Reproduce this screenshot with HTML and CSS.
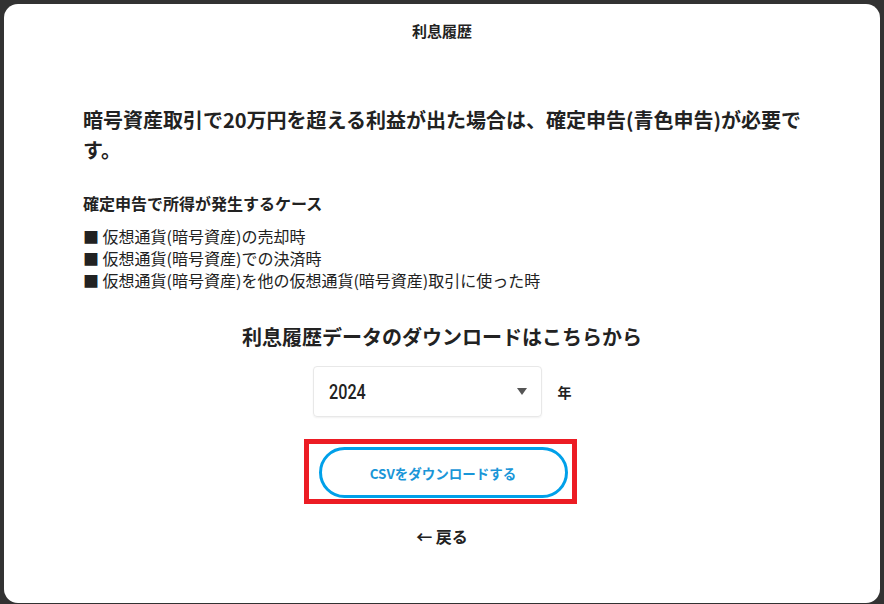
FILE: index.html
```html
<!DOCTYPE html>
<html lang="ja">
<head>
<meta charset="utf-8">
<title>利息履歴</title>
<link rel="stylesheet" href="styles.css">
</head>
<body>
<div class="card">
  <header class="card-title">利息履歴</header>
  <main class="content">
    <h1 class="lead">暗号資産取引で20万円を超える利益が出た場合は、確定申告(青色申告)が必要です。</h1>
    <h2 class="sub">確定申告で所得が発生するケース</h2>
    <ul class="cases">
      <li>■ 仮想通貨(暗号資産)の売却時</li>
      <li>■ 仮想通貨(暗号資産)での決済時</li>
      <li>■ 仮想通貨(暗号資産)を他の仮想通貨(暗号資産)取引に使った時</li>
    </ul>
    <h2 class="dl-title">利息履歴データのダウンロードはこちらから</h2>
    <div class="year-row">
      <div class="select">
        <span class="select-value">2024</span>
        <span class="caret"></span>
      </div>
      <span class="year-unit">年</span>
    </div>
    <div class="btn-wrap">
      <button class="csv-btn">CSVをダウンロードする</button>
      <span class="highlight"></span>
    </div>
    <a class="back">← 戻る</a>
  </main>
</div>
</body>
</html>
```

FILE: styles.css
```css
* { box-sizing: border-box; }
html, body { margin: 0; padding: 0; }
body {
  background: #323232;
  width: 884px;
  height: 604px;
  overflow: hidden;
  font-family: "Noto Sans CJK JP", "Noto Sans", sans-serif;
  color: #222;
  padding: 4px 4px 0 4px;
}
.card {
  background: #fff;
  border-radius: 14px;
  height: 599px;
  padding-top: 16px;
}
.card-title {
  text-align: center;
  font-size: 15px;
  line-height: 22px;
  font-weight: 700;
}
.content {
  padding: 0 72px 0 79px;
  display: flex;
  flex-direction: column;
}
.lead {
  margin: 63px 0 0;
  font-size: 20px;
  line-height: 30px;
  font-weight: 700;
}
.sub {
  margin: 26px 0 0;
  font-size: 16px;
  line-height: 24px;
  font-weight: 700;
}
.cases {
  list-style: none;
  margin: 10px 0 0;
  padding: 0;
  font-size: 16px;
  line-height: 22px;
}
.dl-title {
  margin: 31px 7px 0 0;
  text-align: center;
  font-size: 20px;
  line-height: 30px;
  font-weight: 700;
}
.year-row {
  margin: 14px 7px 0 0;
  display: flex;
  justify-content: center;
  align-items: center;
  gap: 16px;
}
.select {
  width: 229px;
  height: 51px;
  border: 1px solid #e8e8e8;
  border-radius: 4px;
  box-shadow: 0 1px 2px rgba(0,0,0,0.06);
  display: flex;
  align-items: center;
  justify-content: space-between;
  padding: 0 14px 0 15px;
}
.select-value {
  display: inline-block;
  font-family: Roboto, "Noto Sans", sans-serif;
  font-size: 21px;
  line-height: 24px;
  font-weight: 500;
  color: #222;
  transform: scaleX(0.77);
  transform-origin: left center;
}
.caret {
  width: 0;
  height: 0;
  border-left: 5px solid transparent;
  border-right: 5px solid transparent;
  border-top: 7px solid #555;
}
.year-unit {
  font-size: 14px;
  font-weight: 700;
}
.btn-wrap {
  position: relative;
  align-self: center;
  margin: 30px 5px 0 0;
}
.csv-btn {
  display: block;
  width: 249px;
  height: 51px;
  border: 3px solid #00a0e9;
  border-radius: 26px;
  background: #fff;
  color: #1a96d8;
  font-family: "Noto Sans CJK JP", "Noto Sans", sans-serif;
  font-size: 13.5px;
  font-weight: 700;
  cursor: pointer;
}
.highlight {
  position: absolute;
  left: -15px;
  right: -9px;
  top: -8px;
  bottom: -6px;
  border: 5px solid #ec1c24;
  pointer-events: none;
}
.back {
  margin: 26px 7px 0 0;
  align-self: center;
  font-size: 16px;
  line-height: 24px;
  font-weight: 700;
  color: #222;
  text-decoration: none;
}
```
